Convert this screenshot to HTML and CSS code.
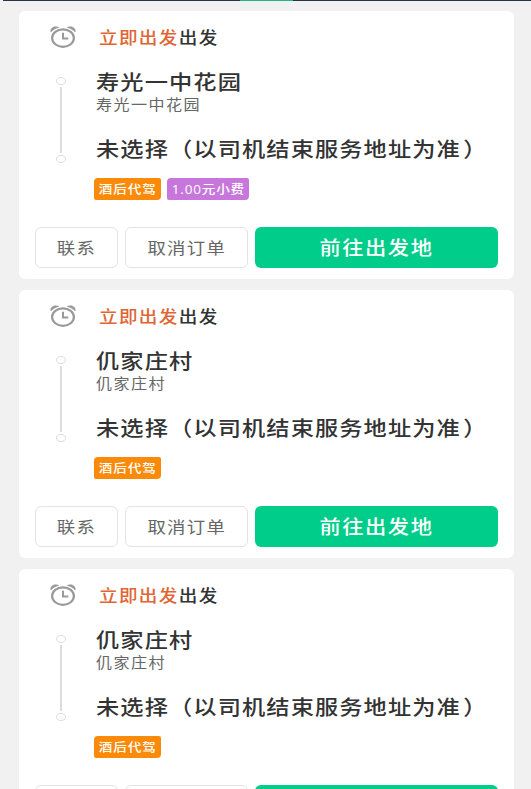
FILE: index.html
```
<!DOCTYPE html>
<html lang="zh-CN">
<head>
<meta charset="utf-8">
<title>订单</title>
<link rel="stylesheet" href="styles.css">
</head>
<body>
<svg class="defs" aria-hidden="true">
  <symbol id="alarm" viewBox="0 0 26 22">
    <ellipse cx="13" cy="12.1" rx="10.9" ry="8.7" fill="none" stroke="currentColor" stroke-width="2.2"/>
    <path d="M13 6.8v5.7h5.3" fill="none" stroke="currentColor" stroke-width="2"/>
    <path d="M.9 6C-.2 2.3 4.4-.9 8.9 1.5 5.4 2.2 3 3.8.9 6zM25.1 6C26.2 2.3 21.6-.9 17.1 1.5 20.6 2.2 23 3.8 25.1 6z" fill="currentColor" stroke="currentColor" stroke-width=".5"/>
  </symbol>
</svg>
<div class="topbar"><span class="topbar-tab"></span></div>
<main class="orders">
  <article class="card">
    <header class="when"><svg class="alarm"><use href="#alarm"/></svg><p class="when-text"><b>立即出发</b>出发</p></header>
    <section class="route">
      <div class="track"><i></i><span></span><i></i></div>
      <div class="places"><h2>寿光一中花园</h2><p class="sub">寿光一中花园</p><h2 class="dest">未选择（以司机结束服务地址为准<span class="close">）</span></h2></div>
    </section>
    <div class="tags"><span class="tag"><em>酒后代驾</em></span><span class="tag tip"><em>1.00元小费</em></span></div>
    <footer class="actions"><button class="contact"><em>联系</em></button><button class="cancel"><em>取消订单</em></button><button class="go"><em>前往出发地</em></button></footer>
  </article>
  <article class="card">
    <header class="when"><svg class="alarm"><use href="#alarm"/></svg><p class="when-text"><b>立即出发</b>出发</p></header>
    <section class="route">
      <div class="track"><i></i><span></span><i></i></div>
      <div class="places"><h2>仉家庄村</h2><p class="sub">仉家庄村</p><h2 class="dest">未选择（以司机结束服务地址为准<span class="close">）</span></h2></div>
    </section>
    <div class="tags"><span class="tag"><em>酒后代驾</em></span></div>
    <footer class="actions"><button class="contact"><em>联系</em></button><button class="cancel"><em>取消订单</em></button><button class="go"><em>前往出发地</em></button></footer>
  </article>
  <article class="card">
    <header class="when"><svg class="alarm"><use href="#alarm"/></svg><p class="when-text"><b>立即出发</b>出发</p></header>
    <section class="route">
      <div class="track"><i></i><span></span><i></i></div>
      <div class="places"><h2>仉家庄村</h2><p class="sub">仉家庄村</p><h2 class="dest">未选择（以司机结束服务地址为准<span class="close">）</span></h2></div>
    </section>
    <div class="tags"><span class="tag"><em>酒后代驾</em></span></div>
    <footer class="actions"><button class="contact" aria-label="联系"></button><button class="cancel" aria-label="取消订单"></button><button class="go" aria-label="前往出发地"></button></footer>
  </article>
</main>
</body>
</html>
```
FILE: styles.css
```
* { box-sizing: border-box; margin: 0; padding: 0; }
body {
  height: 789px;
  overflow: hidden;
  background: #f1f1f1;
  color: #333;
  font-family: "Noto Sans CJK SC", sans-serif;
}
.defs { display: none; }
.topbar { height: 1px; margin-left: 3px; background: #2b3445; }
.topbar-tab { display: block; width: 53px; height: 1px; margin-left: 237px; background: #22b583; }
.orders { display: flex; flex-direction: column; gap: 11px; height: 788px; overflow: hidden; padding: 10px 17px 0 19px; }
.card { flex: none; height: 268px; padding: 0 16px; background: #fff; border-radius: 6px; }

/* departure time */
.when { display: flex; align-items: center; height: 53px; padding: 0 0 1px 15px; }
.alarm { width: 26px; height: 22px; color: #999; }
.when-text {
  margin-left: 23px;
  padding-bottom: 1px;
  font-size: 16.6px;
  font-weight: 500;
  letter-spacing: 1.2px;
  line-height: 24px;
  white-space: nowrap;
  transform: scaleX(1.12);
  transform-origin: left;
}
.when-text b { font-weight: 500; color: #df6634; }

/* pickup and destination */
.route { display: flex; height: 114px; padding-left: 21px; }
.track { display: flex; flex-direction: column; align-items: center; width: 10px; padding-top: 13px; height: 99px; }
.track i { width: 10px; height: 8px; border: 1px solid #dedede; border-radius: 50%; }
.track span { flex: 1; width: 2px; margin: 2px 0; background: #dcdcdc; }
.places { margin-left: 30px; padding-top: 3px; white-space: nowrap; }
h2 {
  font-size: 20.4px;
  font-weight: 500;
  letter-spacing: 0.95px;
  line-height: 28px;
  transform: scaleX(1.14);
  transform-origin: left;
}
.sub {
  color: #666;
  font-size: 14.4px;
  letter-spacing: 1.3px;
  line-height: 18px;
  transform: scaleX(1.115);
  transform-origin: left;
}
.dest { margin-top: 21px; }
.close { margin-left: 2px; }

em { display: inline-block; font-style: normal; white-space: nowrap; transform: scaleX(1.13); }
.tags { display: flex; gap: 6px; height: 49px; padding-left: 59px; }
.tag {
  display: flex;
  align-items: center;
  justify-content: center;
  width: 67px;
  height: 22px;
  padding-bottom: 1px;
  background: #fb8a08;
  border-radius: 4px 2px 4px 2px;
  color: #fff;
  font-size: 12px;
  font-weight: 500;
  letter-spacing: 0.85px;
}
.tip { width: 82px; background: #c777dc; font-family: "Open Sans", "Noto Sans CJK SC", sans-serif; letter-spacing: 0.7px; }

.actions { display: grid; grid-template-columns: 83px 123px 243px; gap: 7px; height: 41px; }
button {
  height: 41px;
  padding-bottom: 2px;
  border: 1px solid #e3e3e3;
  border-radius: 6px;
  background: #fff;
  color: #666;
  font-family: inherit;
  font-size: 16.3px;
  letter-spacing: 1.1px;
}
.go { border: 0; background: #00cd8a; color: #fff; font-size: 18.8px; font-weight: 500; letter-spacing: 1.4px; }
```
